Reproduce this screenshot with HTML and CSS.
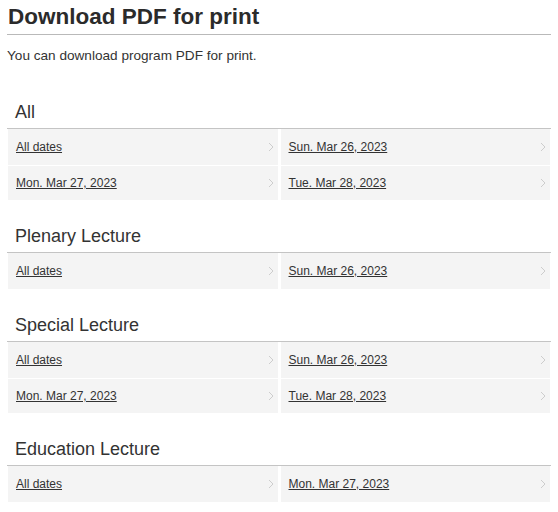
FILE: index.html
```html
<!DOCTYPE html>
<html>
<head>
<meta charset="utf-8">
<link rel="stylesheet" href="styles.css">
</head>
<body>
<div class="page">
  <h1 class="title">Download PDF for print</h1>
  <p class="intro">You can download program PDF for print.</p>

  <section class="group first">
    <h2 class="group-title">All</h2>
    <div class="grid">
      <a class="item" href="#"><span class="label">All dates</span><svg class="chev" width="6" height="10" viewBox="0 0 6 10"><polyline points="1,1 5,5 1,9" fill="none" stroke="#cdcdcd" stroke-width="1"/></svg></a>
      <a class="item" href="#"><span class="label">Sun. Mar 26, 2023</span><svg class="chev" width="6" height="10" viewBox="0 0 6 10"><polyline points="1,1 5,5 1,9" fill="none" stroke="#cdcdcd" stroke-width="1"/></svg></a>
      <a class="item" href="#"><span class="label">Mon. Mar 27, 2023</span><svg class="chev" width="6" height="10" viewBox="0 0 6 10"><polyline points="1,1 5,5 1,9" fill="none" stroke="#cdcdcd" stroke-width="1"/></svg></a>
      <a class="item" href="#"><span class="label">Tue. Mar 28, 2023</span><svg class="chev" width="6" height="10" viewBox="0 0 6 10"><polyline points="1,1 5,5 1,9" fill="none" stroke="#cdcdcd" stroke-width="1"/></svg></a>
    </div>
  </section>

  <section class="group">
    <h2 class="group-title">Plenary Lecture</h2>
    <div class="grid">
      <a class="item" href="#"><span class="label">All dates</span><svg class="chev" width="6" height="10" viewBox="0 0 6 10"><polyline points="1,1 5,5 1,9" fill="none" stroke="#cdcdcd" stroke-width="1"/></svg></a>
      <a class="item" href="#"><span class="label">Sun. Mar 26, 2023</span><svg class="chev" width="6" height="10" viewBox="0 0 6 10"><polyline points="1,1 5,5 1,9" fill="none" stroke="#cdcdcd" stroke-width="1"/></svg></a>
    </div>
  </section>

  <section class="group">
    <h2 class="group-title">Special Lecture</h2>
    <div class="grid">
      <a class="item" href="#"><span class="label">All dates</span><svg class="chev" width="6" height="10" viewBox="0 0 6 10"><polyline points="1,1 5,5 1,9" fill="none" stroke="#cdcdcd" stroke-width="1"/></svg></a>
      <a class="item" href="#"><span class="label">Sun. Mar 26, 2023</span><svg class="chev" width="6" height="10" viewBox="0 0 6 10"><polyline points="1,1 5,5 1,9" fill="none" stroke="#cdcdcd" stroke-width="1"/></svg></a>
      <a class="item" href="#"><span class="label">Mon. Mar 27, 2023</span><svg class="chev" width="6" height="10" viewBox="0 0 6 10"><polyline points="1,1 5,5 1,9" fill="none" stroke="#cdcdcd" stroke-width="1"/></svg></a>
      <a class="item" href="#"><span class="label">Tue. Mar 28, 2023</span><svg class="chev" width="6" height="10" viewBox="0 0 6 10"><polyline points="1,1 5,5 1,9" fill="none" stroke="#cdcdcd" stroke-width="1"/></svg></a>
    </div>
  </section>

  <section class="group">
    <h2 class="group-title">Education Lecture</h2>
    <div class="grid">
      <a class="item" href="#"><span class="label">All dates</span><svg class="chev" width="6" height="10" viewBox="0 0 6 10"><polyline points="1,1 5,5 1,9" fill="none" stroke="#cdcdcd" stroke-width="1"/></svg></a>
      <a class="item" href="#"><span class="label">Mon. Mar 27, 2023</span><svg class="chev" width="6" height="10" viewBox="0 0 6 10"><polyline points="1,1 5,5 1,9" fill="none" stroke="#cdcdcd" stroke-width="1"/></svg></a>
    </div>
  </section>
</div>
</body>
</html>
```

FILE: styles.css
```css
html, body {
  margin: 0;
  padding: 0;
  background: #fff;
}
body {
  font-family: "Liberation Sans", Arial, sans-serif;
  color: #333;
}
.page {
  padding: 0 7px;
}
.title {
  margin: 0;
  padding: 3px 1px 4px;
  font-size: 22.5px;
  line-height: 27px;
  font-weight: bold;
  color: #2b2b2b;
  border-bottom: 1px solid #b9b9b9;
}
.intro {
  margin: 12px 0 0;
  font-size: 13.6px;
  line-height: 17px;
  color: #333;
}
.group {
  margin-top: 25px;
}
.group.first {
  margin-top: 37px;
}
.group-title {
  margin: 0;
  padding: 0 8px 5px;
  font-size: 18px;
  line-height: 22px;
  font-weight: normal;
  color: #333;
  border-bottom: 1px solid #c4c4c4;
}
.grid {
  display: grid;
  grid-template-columns: 1fr 1fr;
  grid-template-rows: 36px;
  grid-auto-rows: 34px;
  column-gap: 3px;
  row-gap: 1px;
  margin: 0 1px;
}
.item {
  display: flex;
  align-items: center;
  justify-content: space-between;
  padding: 0 4px 0 8px;
  background: #f4f4f4;
  text-decoration: none;
}
.label {
  font-size: 12px;
  color: #333;
  text-decoration: underline;
}
.chev {
  display: block;
  flex: none;
}
```
